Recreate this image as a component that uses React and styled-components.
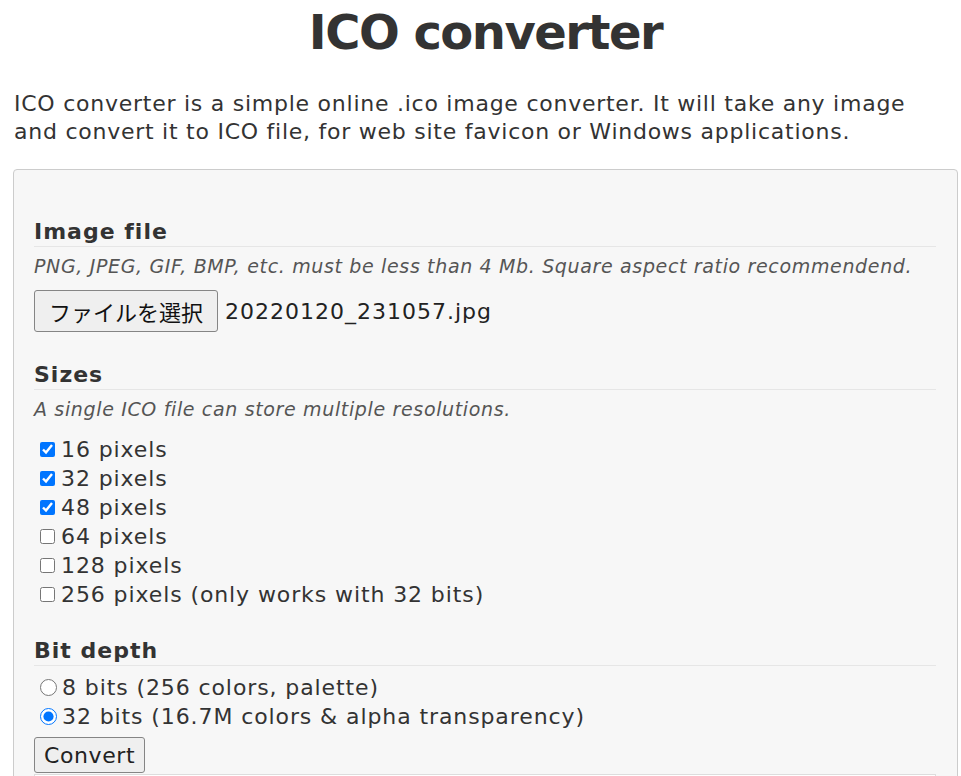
import React from "react";
import styled, { createGlobalStyle } from "styled-components";

const GlobalStyle = createGlobalStyle`
  html, body { margin: 0; padding: 0; background: #ffffff; }
  body {
    font-family: "DejaVu Sans", Verdana, sans-serif;
    color: #333333;
  }
`;

const Page = styled.div`
  padding: 0 3px 0 13px;
`;

const Title = styled.h1`
  margin: 4px 0 0;
  font-size: 48px;
  line-height: 56px;
  font-weight: bold;
  letter-spacing: -1.5px;
  text-align: center;
  color: #333333;
`;

const Intro = styled.p`
  margin: 30px 12px 0 1px;
  font-size: 22px;
  line-height: 28px;
  letter-spacing: 0.75px;
  color: #333333;
`;

const Panel = styled.div`
  margin-top: 23px;
  background: #f7f7f7;
  border: 1px solid #cccccc;
  border-radius: 4px;
  padding: 48px 21px 0 20px;
  height: 700px;
  box-sizing: border-box;
`;

const Section = styled.div`
  margin-top: ${(p) => p.$top}px;
`;

const Heading = styled.h3`
  margin: 0;
  font-size: 22px;
  line-height: 28px;
  font-weight: bold;
  letter-spacing: 1px;
  color: #333333;
  border-bottom: 1px solid #e6e6e6;
`;

const Hint = styled.p`
  margin: 7px 0 0;
  font-size: 19px;
  line-height: 24px;
  font-style: italic;
  letter-spacing: 0.65px;
  color: #555555;
`;

const FileRow = styled.div`
  margin-top: 12px;
  display: flex;
  align-items: center;
  gap: 7px;
`;

const FileButton = styled.button`
  height: 42px;
  padding: 0 14px;
  font-family: "Noto Sans CJK JP", sans-serif;
  font-size: 22px;
  color: #111111;
  background: #efefef;
  border: 1px solid #858585;
  border-radius: 3px;
`;

const FileName = styled.span`
  font-size: 22px;
  letter-spacing: 1px;
  color: #222222;
`;

const OptionList = styled.div`
  margin-top: ${(p) => p.$top}px;
  display: flex;
  flex-direction: column;
`;

const Option = styled.label`
  display: flex;
  align-items: center;
  height: 29px;
  font-size: 22px;
  line-height: 29px;
  letter-spacing: 0.9px;
  color: #333333;
`;

const Check = styled.input`
  width: 15px;
  height: 15px;
  margin: 0 6px 0 6px;
  accent-color: #0075ff;
`;

const Radio = styled.input`
  width: 17px;
  height: 17px;
  margin: 0 5px 0 6px;
  accent-color: #0075ff;
`;

const ConvertButton = styled.button`
  margin-top: 6px;
  height: 36px;
  padding: 0 9px;
  font-family: "DejaVu Sans", Verdana, sans-serif;
  font-size: 22px;
  letter-spacing: 0.6px;
  color: #222222;
  background: #efefef;
  border: 1px solid #858585;
  border-radius: 3px;
`;

const Result = styled.div`
  margin-top: 1px;
  height: 40px;
  background: #ffffff;
  border: 1px solid #dddddd;
`;

const sizes = [
  { label: "16 pixels", checked: true },
  { label: "32 pixels", checked: true },
  { label: "48 pixels", checked: true },
  { label: "64 pixels", checked: false },
  { label: "128 pixels", checked: false },
  { label: "256 pixels (only works with 32 bits)", checked: false },
];

const depths = [
  { label: "8 bits (256 colors, palette)", checked: false },
  { label: "32 bits (16.7M colors & alpha transparency)", checked: true },
];

export default function App() {
  return (
    <>
      <GlobalStyle />
      <Page>
        <Title>ICO converter</Title>
        <Intro>
          ICO converter is a simple online .ico image converter. It will take any image
          and convert it to ICO file, for web site favicon or Windows applications.
        </Intro>
        <Panel>
          <Section $top={0}>
            <Heading>Image file</Heading>
            <Hint>
              PNG, JPEG, GIF, BMP, etc. must be less than 4 Mb. Square aspect ratio recommendend.
            </Hint>
            <FileRow>
              <FileButton type="button">ファイルを選択</FileButton>
              <FileName>20220120_231057.jpg</FileName>
            </FileRow>
          </Section>
          <Section $top={29}>
            <Heading>Sizes</Heading>
            <Hint>A single ICO file can store multiple resolutions.</Hint>
            <OptionList $top={14}>
              {sizes.map((s) => (
                <Option key={s.label}>
                  <Check type="checkbox" defaultChecked={s.checked} />
                  {s.label}
                </Option>
              ))}
            </OptionList>
          </Section>
          <Section $top={28}>
            <Heading>Bit depth</Heading>
            <OptionList $top={7}>
              {depths.map((d) => (
                <Option key={d.label}>
                  <Radio type="radio" name="depth" defaultChecked={d.checked} />
                  {d.label}
                </Option>
              ))}
            </OptionList>
            <ConvertButton type="button">Convert</ConvertButton>
            <Result />
          </Section>
        </Panel>
      </Page>
    </>
  );
}
